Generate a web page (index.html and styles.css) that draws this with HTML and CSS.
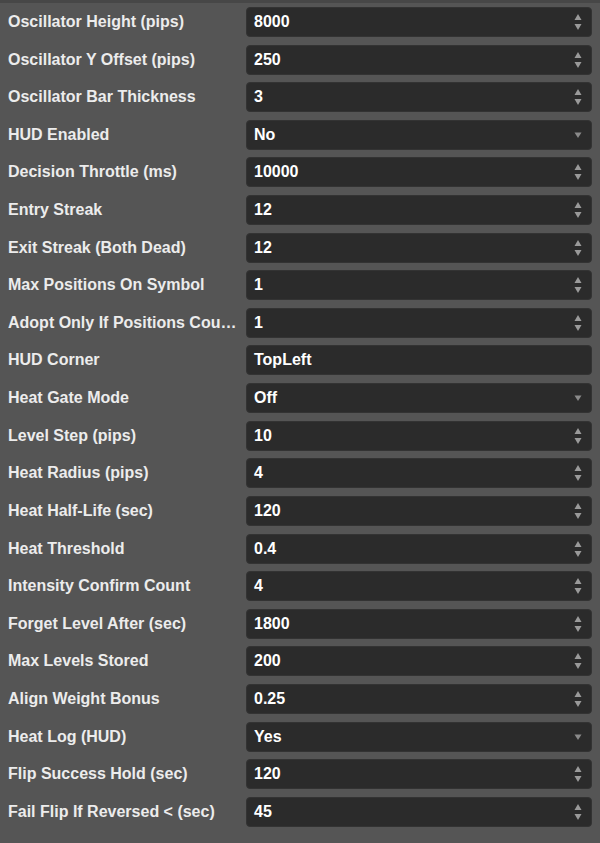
FILE: index.html
```html
<!DOCTYPE html>
<html>
<head>
<meta charset="utf-8">
<link rel="stylesheet" href="styles.css">
</head>
<body>
<div class="panel">
  <div class="row"><div class="label">Oscillator Height (pips)</div><div class="field num"><span>8000</span><svg class="spin" width="8" height="18" viewBox="0 0 8 18"><path d="M4 1L7.5 7H0.5Z"/><path d="M4 17L7.5 11H0.5Z"/></svg></div></div>
  <div class="row"><div class="label">Oscillator Y Offset (pips)</div><div class="field num"><span>250</span><svg class="spin" width="8" height="18" viewBox="0 0 8 18"><path d="M4 1L7.5 7H0.5Z"/><path d="M4 17L7.5 11H0.5Z"/></svg></div></div>
  <div class="row"><div class="label">Oscillator Bar Thickness</div><div class="field num"><span>3</span><svg class="spin" width="8" height="18" viewBox="0 0 8 18"><path d="M4 1L7.5 7H0.5Z"/><path d="M4 17L7.5 11H0.5Z"/></svg></div></div>
  <div class="row"><div class="label">HUD Enabled</div><div class="field sel"><span>No</span><svg class="caret" width="8" height="6" viewBox="0 0 8 6"><path d="M4 6L7.5 0.5H0.5Z"/></svg></div></div>
  <div class="row"><div class="label">Decision Throttle (ms)</div><div class="field num"><span>10000</span><svg class="spin" width="8" height="18" viewBox="0 0 8 18"><path d="M4 1L7.5 7H0.5Z"/><path d="M4 17L7.5 11H0.5Z"/></svg></div></div>
  <div class="row"><div class="label">Entry Streak</div><div class="field num"><span>12</span><svg class="spin" width="8" height="18" viewBox="0 0 8 18"><path d="M4 1L7.5 7H0.5Z"/><path d="M4 17L7.5 11H0.5Z"/></svg></div></div>
  <div class="row"><div class="label">Exit Streak (Both Dead)</div><div class="field num"><span>12</span><svg class="spin" width="8" height="18" viewBox="0 0 8 18"><path d="M4 1L7.5 7H0.5Z"/><path d="M4 17L7.5 11H0.5Z"/></svg></div></div>
  <div class="row"><div class="label">Max Positions On Symbol</div><div class="field num"><span>1</span><svg class="spin" width="8" height="18" viewBox="0 0 8 18"><path d="M4 1L7.5 7H0.5Z"/><path d="M4 17L7.5 11H0.5Z"/></svg></div></div>
  <div class="row"><div class="label">Adopt Only If Positions Count Below</div><div class="field num"><span>1</span><svg class="spin" width="8" height="18" viewBox="0 0 8 18"><path d="M4 1L7.5 7H0.5Z"/><path d="M4 17L7.5 11H0.5Z"/></svg></div></div>
  <div class="row"><div class="label">HUD Corner</div><div class="field"><span>TopLeft</span></div></div>
  <div class="row"><div class="label">Heat Gate Mode</div><div class="field sel"><span>Off</span><svg class="caret" width="8" height="6" viewBox="0 0 8 6"><path d="M4 6L7.5 0.5H0.5Z"/></svg></div></div>
  <div class="row"><div class="label">Level Step (pips)</div><div class="field num"><span>10</span><svg class="spin" width="8" height="18" viewBox="0 0 8 18"><path d="M4 1L7.5 7H0.5Z"/><path d="M4 17L7.5 11H0.5Z"/></svg></div></div>
  <div class="row"><div class="label">Heat Radius (pips)</div><div class="field num"><span>4</span><svg class="spin" width="8" height="18" viewBox="0 0 8 18"><path d="M4 1L7.5 7H0.5Z"/><path d="M4 17L7.5 11H0.5Z"/></svg></div></div>
  <div class="row"><div class="label">Heat Half-Life (sec)</div><div class="field num"><span>120</span><svg class="spin" width="8" height="18" viewBox="0 0 8 18"><path d="M4 1L7.5 7H0.5Z"/><path d="M4 17L7.5 11H0.5Z"/></svg></div></div>
  <div class="row"><div class="label">Heat Threshold</div><div class="field num"><span>0.4</span><svg class="spin" width="8" height="18" viewBox="0 0 8 18"><path d="M4 1L7.5 7H0.5Z"/><path d="M4 17L7.5 11H0.5Z"/></svg></div></div>
  <div class="row"><div class="label">Intensity Confirm Count</div><div class="field num"><span>4</span><svg class="spin" width="8" height="18" viewBox="0 0 8 18"><path d="M4 1L7.5 7H0.5Z"/><path d="M4 17L7.5 11H0.5Z"/></svg></div></div>
  <div class="row"><div class="label">Forget Level After (sec)</div><div class="field num"><span>1800</span><svg class="spin" width="8" height="18" viewBox="0 0 8 18"><path d="M4 1L7.5 7H0.5Z"/><path d="M4 17L7.5 11H0.5Z"/></svg></div></div>
  <div class="row"><div class="label">Max Levels Stored</div><div class="field num"><span>200</span><svg class="spin" width="8" height="18" viewBox="0 0 8 18"><path d="M4 1L7.5 7H0.5Z"/><path d="M4 17L7.5 11H0.5Z"/></svg></div></div>
  <div class="row"><div class="label">Align Weight Bonus</div><div class="field num"><span>0.25</span><svg class="spin" width="8" height="18" viewBox="0 0 8 18"><path d="M4 1L7.5 7H0.5Z"/><path d="M4 17L7.5 11H0.5Z"/></svg></div></div>
  <div class="row"><div class="label">Heat Log (HUD)</div><div class="field sel"><span>Yes</span><svg class="caret" width="8" height="6" viewBox="0 0 8 6"><path d="M4 6L7.5 0.5H0.5Z"/></svg></div></div>
  <div class="row"><div class="label">Flip Success Hold (sec)</div><div class="field num"><span>120</span><svg class="spin" width="8" height="18" viewBox="0 0 8 18"><path d="M4 1L7.5 7H0.5Z"/><path d="M4 17L7.5 11H0.5Z"/></svg></div></div>
  <div class="row"><div class="label">Fail Flip If Reversed &lt; (sec)</div><div class="field num"><span>45</span><svg class="spin" width="8" height="18" viewBox="0 0 8 18"><path d="M4 1L7.5 7H0.5Z"/><path d="M4 17L7.5 11H0.5Z"/></svg></div></div>
</div>
</body>
</html>
```
FILE: styles.css
```css
html, body {
  margin: 0;
  padding: 0;
}
body {
  background: #555555;
  font-family: "Liberation Sans", Arial, sans-serif;
  width: 600px;
  height: 843px;
  overflow: hidden;
  border-top: 3px solid #474747;
  box-sizing: border-box;
}
.panel {
  padding: 4px 8px 0 8px;
  display: flex;
  flex-direction: column;
  gap: 7.62px;
}
.row {
  display: flex;
  align-items: center;
  height: 30px;
}
.label {
  width: 232px;
  margin-right: 6px;
  color: #ececec;
  font-size: 16px;
  font-weight: bold;
  white-space: nowrap;
  overflow: hidden;
  text-overflow: ellipsis;
}
.field {
  width: 346px;
  height: 30px;
  box-sizing: border-box;
  background: #2b2b2b;
  border: 1px solid #333333;
  border-radius: 4px;
  display: flex;
  align-items: center;
  padding: 0 9px 0 7px;
  color: #ffffff;
  font-size: 16px;
  font-weight: bold;
}
.field span {
  flex: 1;
}
.spin path {
  fill: #9a9a9a;
}
.caret path {
  fill: #8a8a8a;
}
```
